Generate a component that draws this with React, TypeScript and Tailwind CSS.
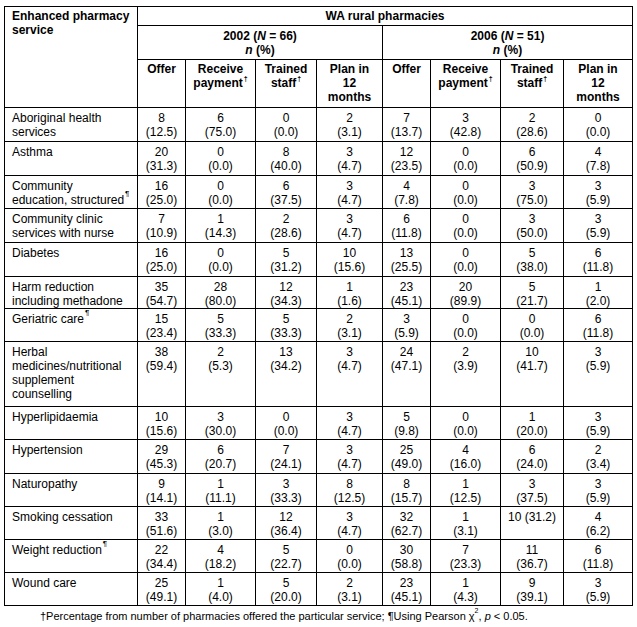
const dagger = <sup className="ml-px text-[7px] align-[3px] leading-none">†</sup>;
const pilcrow = <sup className="ml-px text-[8px] align-[4px] leading-none">¶</sup>;

type Row = {
  label: React.ReactNode;
  h: string;
  cells: string[];
};

const rows: Row[] = [
  { label: <>Aboriginal health<br />services</>, h: 'h-[34px]', cells: ['8 (12.5)', '6 (75.0)', '0 (0.0)', '2 (3.1)', '7 (13.7)', '3 (42.8)', '2 (28.6)', '0 (0.0)'] },
  { label: 'Asthma', h: 'h-[34px]', cells: ['20 (31.3)', '0 (0.0)', '8 (40.0)', '3 (4.7)', '12 (23.5)', '0 (0.0)', '6 (50.9)', '4 (7.8)'] },
  { label: <>Community<br />education, structured{pilcrow}</>, h: 'h-[33px]', cells: ['16 (25.0)', '0 (0.0)', '6 (37.5)', '3 (4.7)', '4 (7.8)', '0 (0.0)', '3 (75.0)', '3 (5.9)'] },
  { label: <>Community clinic<br />services with nurse</>, h: 'h-[34px]', cells: ['7 (10.9)', '1 (14.3)', '2 (28.6)', '3 (4.7)', '6 (11.8)', '0 (0.0)', '3 (50.0)', '3 (5.9)'] },
  { label: 'Diabetes', h: 'h-[34px]', cells: ['16 (25.0)', '0 (0.0)', '5 (31.2)', '10 (15.6)', '13 (25.5)', '0 (0.0)', '5 (38.0)', '6 (11.8)'] },
  { label: <>Harm reduction<br />including methadone</>, h: 'h-[32px]', cells: ['35 (54.7)', '28 (80.0)', '12 (34.3)', '1 (1.6)', '23 (45.1)', '20 (89.9)', '5 (21.7)', '1 (2.0)'] },
  { label: <>Geriatric care{pilcrow}</>, h: 'h-[33px]', cells: ['15 (23.4)', '5 (33.3)', '5 (33.3)', '2 (3.1)', '3 (5.9)', '0 (0.0)', '0 (0.0)', '6 (11.8)'] },
  { label: <>Herbal<br />medicines/nutritional<br />supplement<br />counselling</>, h: 'h-[65px]', cells: ['38 (59.4)', '2 (5.3)', '13 (34.2)', '3 (4.7)', '24 (47.1)', '2 (3.9)', '10 (41.7)', '3 (5.9)'] },
  { label: 'Hyperlipidaemia', h: 'h-[33px]', cells: ['10 (15.6)', '3 (30.0)', '0 (0.0)', '3 (4.7)', '5 (9.8)', '0 (0.0)', '1 (20.0)', '3 (5.9)'] },
  { label: 'Hypertension', h: 'h-[34px]', cells: ['29 (45.3)', '6 (20.7)', '7 (24.1)', '3 (4.7)', '25 (49.0)', '4 (16.0)', '6 (24.0)', '2 (3.4)'] },
  { label: 'Naturopathy', h: 'h-[33px]', cells: ['9 (14.1)', '1 (11.1)', '3 (33.3)', '8 (12.5)', '8 (15.7)', '1 (12.5)', '3 (37.5)', '3 (5.9)'] },
  { label: 'Smoking cessation', h: 'h-[33px]', cells: ['33 (51.6)', '1 (3.0)', '12 (36.4)', '3 (4.7)', '32 (62.7)', '1 (3.1)', '10 (31.2)*', '4 (6.2)'] },
  { label: <>Weight reduction{pilcrow}</>, h: 'h-[33px]', cells: ['22 (34.4)', '4 (18.2)', '5 (22.7)', '0 (0.0)', '30 (58.8)', '7 (23.3)', '11 (36.7)', '6 (11.8)'] },
  { label: 'Wound care', h: 'h-[33px]', cells: ['25 (49.1)', '1 (4.0)', '5 (20.0)', '2 (3.1)', '23 (45.1)', '1 (4.3)', '9 (39.1)', '3 (5.9)'] },
];

const widths = ['w-[133px]', 'w-[48px]', 'w-[70px]', 'w-[61px]', 'w-[66px]', 'w-[48px]', 'w-[70px]', 'w-[63px]', 'w-[69px]'];

function Value({ v }: { v: string }) {
  // a trailing * keeps the value on one line, as in the source table
  if (v.endsWith('*')) return <>{v.slice(0, -1)}</>;
  const [n, pct] = v.split(' ');
  return (
    <>
      {n}
      <br />
      {pct}
    </>
  );
}

function SubHeads() {
  return (
    <>
      <th className="border border-black px-1 pt-[2px] align-top font-bold">Offer</th>
      <th className="border border-black px-1 pt-[2px] align-top font-bold">
        Receive<br />payment{dagger}
      </th>
      <th className="border border-black px-1 pt-[2px] align-top font-bold">
        Trained<br />staff{dagger}
      </th>
      <th className="border border-black px-1 pt-[2px] align-top font-bold">
        Plan in<br />12<br />months
      </th>
    </>
  );
}

export default function App() {
  return (
    <div className="w-[637px] h-[627px] bg-white text-black font-['Liberation_Sans',Arial,sans-serif] text-[12px] leading-[14px]">
      <div className="pt-[6px] pl-[4px]">
        <table className="table-fixed border-collapse w-[629px]">
          <colgroup>
            {widths.map((w, i) => (
              <col key={i} className={w} />
            ))}
          </colgroup>
          <thead>
            <tr className="h-[19px]">
              <th rowSpan={3} className="border border-black pl-[7px] pr-1 pt-[2px] align-top text-left font-bold">
                Enhanced pharmacy<br />service
              </th>
              <th colSpan={8} className="border border-black pt-[2px] align-top font-bold">
                WA rural pharmacies
              </th>
            </tr>
            <tr className="h-[34px]">
              <th colSpan={4} className="border border-black pt-[3px] align-top font-bold">
                2002 (<i>N</i> = 66)<br />
                <i>n</i> (%)
              </th>
              <th colSpan={4} className="border border-black pt-[3px] align-top font-bold">
                2006 (<i>N</i> = 51)<br />
                <i>n</i> (%)
              </th>
            </tr>
            <tr className="h-[48px]">
              <SubHeads />
              <SubHeads />
            </tr>
          </thead>
          <tbody>
            {rows.map((r, i) => (
              <tr key={i} className={r.h}>
                <td className="border border-black pl-[7px] pr-1 pt-[3px] align-top text-left">{r.label}</td>
                {r.cells.map((c, j) => (
                  <td key={j} className="border border-black px-1 pt-[3px] align-top text-center">
                    <Value v={c} />
                  </td>
                ))}
              </tr>
            ))}
          </tbody>
        </table>
        <p className="pl-[36px] pt-[3px] text-[11px]">
          †Percentage from number of pharmacies offered the particular service; ¶Using Pearson χ
          <sup className="text-[7px] align-[4px] leading-none">2</sup>, <i>p</i> &lt; 0.05.
        </p>
      </div>
    </div>
  );
}
